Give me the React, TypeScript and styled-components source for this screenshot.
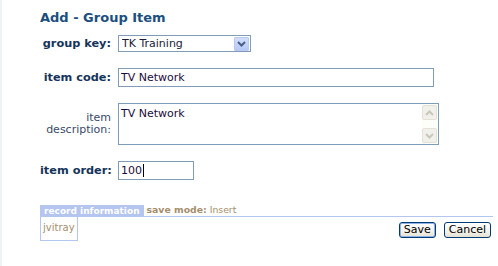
import React from "react";
import styled, { createGlobalStyle } from "styled-components";

const Global = createGlobalStyle`
  html, body { margin: 0; padding: 0; background: #ffffff; }
  body { font-family: "DejaVu Sans", Verdana, sans-serif; }
  * { box-sizing: border-box; }
`;

const Page = styled.div`
  width: 498px;
  height: 266px;
  border-left: 2px solid #eef2f9;
  padding: 10px 5px 0 38px;
  overflow: hidden;
`;

const Title = styled.h1`
  margin: 0;
  font-size: 13px;
  line-height: 16px;
  font-weight: bold;
  color: #1b4f7e;
`;

const FormGrid = styled.div`
  display: grid;
  grid-template-columns: 71px auto;
  column-gap: 7px;
  row-gap: 16px;
  align-items: center;
  margin-top: 9px;
`;

const Label = styled.label<{ $plain?: boolean }>`
  text-align: right;
  font-size: ${(p) => (p.$plain ? "11px" : "11.3px")};
  line-height: 12px;
  font-weight: ${(p) => (p.$plain ? "normal" : "bold")};
  color: ${(p) => (p.$plain ? "#3a4a66" : "#15345a")};
  white-space: nowrap;
`;

const Field = styled.div`
  display: flex;
`;

const SelectBox = styled.div`
  display: flex;
  align-items: center;
  width: 133px;
  height: 17px;
  border: 1px solid #7f9db9;
  background: #fff;
  padding-right: 1px;
`;

const NativeSelect = styled.select`
  appearance: none;
  -webkit-appearance: none;
  flex: 1;
  min-width: 0;
  border: none;
  outline: none;
  background: transparent;
  font-family: "DejaVu Sans", Verdana, sans-serif;
  font-size: 11px;
  color: #1a1a3a;
  padding: 0 0 0 3px;
  height: 15px;
`;

const ArrowButton = styled.span`
  width: 15px;
  height: 14px;
  border: 1px solid #b8c8ee;
  border-radius: 1px;
  background: linear-gradient(#d2defc, #b6c9f5);
  display: flex;
  align-items: center;
  justify-content: center;
`;

const TextInput = styled.input<{ $w: number }>`
  width: ${(p) => p.$w}px;
  height: 19px;
  border: 1px solid #7f9db9;
  padding: 0 2px;
  font-family: "DejaVu Sans", Verdana, sans-serif;
  font-size: 11px;
  color: #1c0c3c;
  outline: none;
`;

const AreaBox = styled.div`
  display: flex;
  width: 321px;
  height: 42px;
  border: 1px solid #7f9db9;
  background: #fff;
`;

const Area = styled.textarea`
  flex: 1;
  border: none;
  outline: none;
  resize: none;
  overflow: hidden;
  padding: 3px 2px;
  font-family: "DejaVu Sans", Verdana, sans-serif;
  font-size: 11px;
  line-height: 13px;
  color: #1c0c3c;
`;

const ScrollTrack = styled.div`
  width: 16px;
  display: flex;
  flex-direction: column;
  justify-content: space-between;
  background: #fdfdfa;
  padding: 1px 1px 1px 0;
`;

const ScrollBtn = styled.span`
  height: 15px;
  border: 1px solid #e4e2d6;
  border-radius: 2px;
  background: #f1f0ea;
  display: flex;
  align-items: center;
  justify-content: center;
`;

const FakeInput = styled.div`
  width: 76px;
  height: 19px;
  border: 1px solid #7f9db9;
  padding: 0 2px;
  font-size: 11px;
  line-height: 17px;
  color: #1c0c3c;
  display: flex;
  align-items: center;
`;

const Caret = styled.span`
  display: inline-block;
  width: 1px;
  height: 13px;
  background: #000;
  margin-left: 1px;
`;

const Footer = styled.div`
  margin-top: 25px;
`;

const InfoHeader = styled.div`
  display: flex;
  align-items: stretch;
  height: 12px;
`;

const InfoTab = styled.div`
  background: #b4c5ef;
  color: #ffffff;
  font-size: 9px;
  font-weight: bold;
  line-height: 12px;
  padding: 0 4px;
  white-space: nowrap;
`;

const SaveMode = styled.div`
  flex: 1;
  border-bottom: 1px solid #b4c5ef;
  font-size: 9.3px;
  line-height: 10px;
  padding-left: 3px;
  color: #a58e6c;
  white-space: nowrap;
`;

const Strong = styled.b`
  font-weight: bold;
`;

const InfoBody = styled.div`
  display: flex;
  justify-content: space-between;
  align-items: flex-start;
`;

const UserBox = styled.div`
  border: 1px solid #b4c5ef;
  border-top: none;
  height: 24px;
  padding: 0 2px;
  font-size: 10px;
  line-height: 22px;
  color: #a58e6c;
`;

const Buttons = styled.div`
  display: flex;
  gap: 8px;
  margin-top: 5px;
  margin-right: 2px;
`;

const Button = styled.button<{ $focus?: boolean }>`
  height: 16px;
  padding: 0 4px;
  border: 1px solid #003c74;
  border-radius: 3px;
  background: linear-gradient(#ffffff, #f1efe6 70%, #e3e0d2);
  font-family: "DejaVu Sans", Tahoma, sans-serif;
  font-size: 11px;
  line-height: 12px;
  color: #000;
  box-shadow: ${(p) => (p.$focus ? "inset 0 0 0 1px #8fb0e8" : "none")};
`;

const Chevron = ({ dir, color }: { dir: "up" | "down"; color: string }) => (
  <svg width="9" height="6" viewBox="0 0 9 6">
    <path
      d={dir === "down" ? "M1 1 L4.5 4.5 L8 1" : "M1 5 L4.5 1.5 L8 5"}
      fill="none"
      stroke={color}
      strokeWidth="2"
    />
  </svg>
);

export default function App() {
  return (
    <>
      <Global />
      <Page>
        <Title>Add - Group Item</Title>
        <FormGrid>
          <Label>group key:</Label>
          <Field>
            <SelectBox>
              <NativeSelect defaultValue="tk">
                <option value="tk">TK Training</option>
              </NativeSelect>
              <ArrowButton>
                <Chevron dir="down" color="#4b5f86" />
              </ArrowButton>
            </SelectBox>
          </Field>

          <Label>item code:</Label>
          <Field>
            <TextInput $w={316} defaultValue="TV Network" />
          </Field>

          <Label $plain>
            item
            <br />
            description:
          </Label>
          <Field>
            <AreaBox>
              <Area defaultValue="TV Network" />
              <ScrollTrack>
                <ScrollBtn>
                  <Chevron dir="up" color="#c9c7ba" />
                </ScrollBtn>
                <ScrollBtn>
                  <Chevron dir="down" color="#c9c7ba" />
                </ScrollBtn>
              </ScrollTrack>
            </AreaBox>
          </Field>

          <Label>item order:</Label>
          <Field>
            <FakeInput>
              100
              <Caret />
            </FakeInput>
          </Field>
        </FormGrid>

        <Footer>
          <InfoHeader>
            <InfoTab>record information</InfoTab>
            <SaveMode>
              <Strong>save mode:</Strong> Insert
            </SaveMode>
          </InfoHeader>
          <InfoBody>
            <UserBox>jvitray</UserBox>
            <Buttons>
              <Button $focus>Save</Button>
              <Button>Cancel</Button>
            </Buttons>
          </InfoBody>
        </Footer>
      </Page>
    </>
  );
}
